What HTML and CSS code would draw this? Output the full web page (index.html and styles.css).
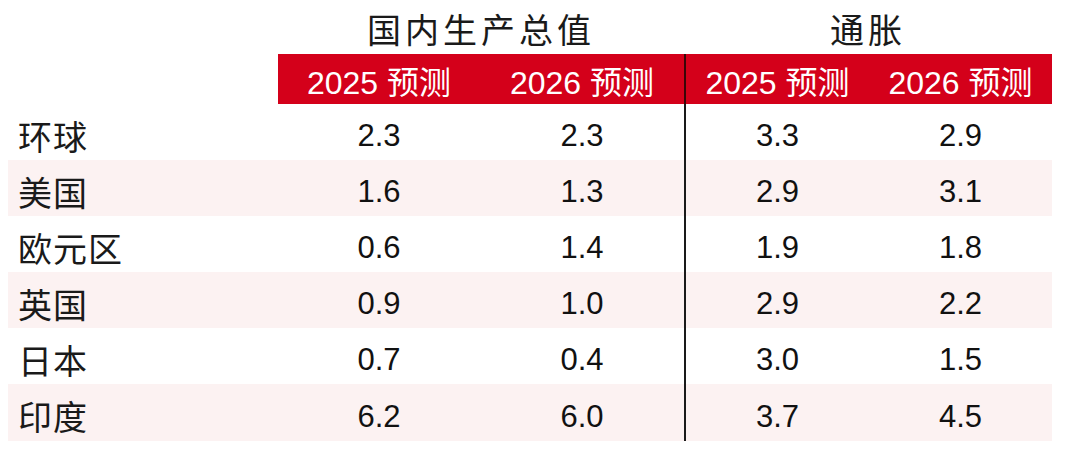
FILE: index.html
```html
<!DOCTYPE html>
<html lang="zh-CN">
<head>
<meta charset="utf-8">
<title>预测</title>
<link rel="stylesheet" href="styles.css">
</head>
<body>
<div class="table">
  <div class="titles">
    <div class="spacer"></div>
    <div class="group-title gdp">国内生产总值</div>
    <div class="group-title infl">通胀</div>
  </div>
  <div class="head">
    <div class="spacer"></div>
    <div class="band">
      <div class="hcell">2025 预测</div>
      <div class="hcell">2026 预测</div>
      <div class="hcell sep">2025 预测</div>
      <div class="hcell">2026 预测</div>
    </div>
  </div>
  <div class="row"><div class="label">环球</div><div class="num">2.3</div><div class="num">2.3</div><div class="num sep">3.3</div><div class="num">2.9</div></div>
  <div class="row alt"><div class="label">美国</div><div class="num">1.6</div><div class="num">1.3</div><div class="num sep">2.9</div><div class="num">3.1</div></div>
  <div class="row"><div class="label">欧元区</div><div class="num">0.6</div><div class="num">1.4</div><div class="num sep">1.9</div><div class="num">1.8</div></div>
  <div class="row alt"><div class="label">英国</div><div class="num">0.9</div><div class="num">1.0</div><div class="num sep">2.9</div><div class="num">2.2</div></div>
  <div class="row"><div class="label">日本</div><div class="num">0.7</div><div class="num">0.4</div><div class="num sep">3.0</div><div class="num">1.5</div></div>
  <div class="row alt last"><div class="label">印度</div><div class="num">6.2</div><div class="num">6.0</div><div class="num sep">3.7</div><div class="num">4.5</div></div>
</div>
</body>
</html>
```

FILE: styles.css
```css
html, body {
  margin: 0;
  padding: 0;
  background: #ffffff;
}

body {
  font-family: "Liberation Sans", "Noto Sans CJK SC", sans-serif;
  color: #111111;
}

.table {
  margin-left: 8px;
  width: 1044px;
  display: flex;
  flex-direction: column;
}

.titles {
  display: grid;
  grid-template-columns: 270px 406px 368px;
  height: 54px;
}

.group-title {
  display: flex;
  align-items: center;
  justify-content: center;
  font-family: "Noto Sans CJK SC", sans-serif;
  font-size: 34px;
  letter-spacing: 4px;
  padding-top: 2px;
  box-sizing: border-box;
  color: #1a1a1a;
}

.head {
  display: grid;
  grid-template-columns: 270px 774px;
  height: 50px;
}

.band {
  background: #d4001a;
  display: grid;
  grid-template-columns: 202px 204px 185px 183px;
}

.hcell {
  display: flex;
  align-items: center;
  justify-content: center;
  color: #ffffff;
  font-size: 32px;
  box-sizing: border-box;
  padding-top: 2px;
}

.row {
  display: grid;
  grid-template-columns: 270px 202px 204px 185px 183px;
  height: 56px;
}

.row.last {
  height: 57px;
}

.row.alt {
  background: #fcf2f2;
}

.label {
  display: flex;
  align-items: center;
  padding-left: 10px;
  padding-top: 6px;
  box-sizing: border-box;
  font-family: "Noto Sans CJK SC", sans-serif;
  font-size: 34px;
  letter-spacing: 1px;
  color: #1a1a1a;
}

.num {
  display: flex;
  align-items: center;
  justify-content: center;
  padding-top: 8px;
  box-sizing: border-box;
  font-size: 31px;
  color: #111111;
}

.sep {
  border-left: 2px solid #1a1a1a;
}

.hcell.sep {
  border-left-color: #3a0608;
}
```
